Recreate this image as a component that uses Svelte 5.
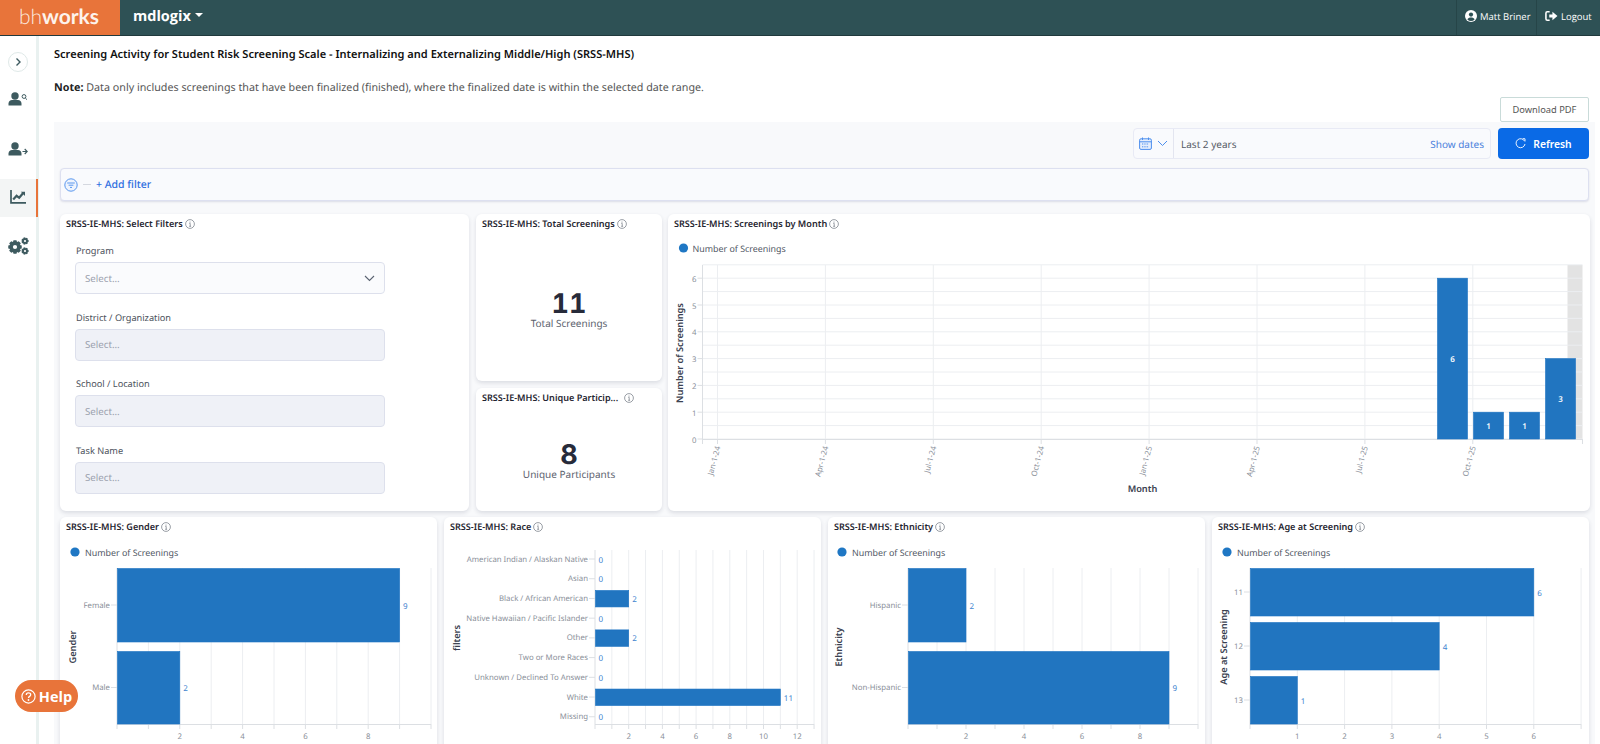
<script>
  const range = (a, b, s = 1) => { const r = []; for (let v = a; v <= b + 1e-9; v += s) r.push(v); return r; };

  const gear = (cx, cy, ro, ri, n) => {
    const pts = [];
    for (let i = 0; i < n; i++) {
      const a = (i / n) * Math.PI * 2;
      const w = Math.PI / n;
      [[ri, -w], [ro, -w * 0.55], [ro, w * 0.55], [ri, w]].forEach(([r, d]) => {
        pts.push(`${(cx + r * Math.cos(a + d)).toFixed(2)} ${(cy + r * Math.sin(a + d)).toFixed(2)}`);
      });
    }
    return 'M' + pts.join('L') + 'Z';
  };

  const gender = {
    name: 'SRSS-IE-MHS: Gender', x0: 60, left: 117, right: 431, unit: 31.4, max: 10, top: 568, step: 2, legend: 75, title: 'Gender', titleX: 72, titleY: 647,
    rows: [
      { label: 'Female', v: 9, y: 568, h: 74 },
      { label: 'Male', v: 2, y: 651, h: 73 }
    ]
  };
  const raceLabels = [
    ['American Indian / Alaskan Native', 0], ['Asian', 0], ['Black / African American', 2], ['Native Hawaiian / Pacific Islander', 0],
    ['Other', 2], ['Two or More Races', 0], ['Unknown / Declined To Answer', 0], ['White', 11], ['Missing', 0]
  ];
  const race = {
    name: 'SRSS-IE-MHS: Race', x0: 444, left: 595, right: 814, unit: 16.85, max: 13, top: 550, step: 2, title: 'filters', titleX: 456, titleY: 638,
    rows: raceLabels.map(([label, v], i) => ({ label, v, y: 550.5 + i * 19.72, h: 17 }))
  };
  const ethnicity = {
    name: 'SRSS-IE-MHS: Ethnicity', x0: 828, left: 908, right: 1198, unit: 29, max: 10, top: 568, step: 2, legend: 842, title: 'Ethnicity', titleX: 838, titleY: 647,
    rows: [
      { label: 'Hispanic', v: 2, y: 568, h: 74 },
      { label: 'Non-Hispanic', v: 9, y: 651, h: 73 }
    ]
  };
  const age = {
    name: 'SRSS-IE-MHS: Age at Screening', x0: 1212, left: 1250, right: 1581, unit: 47.3, max: 7, top: 568, step: 1, legend: 1227, title: 'Age at Screening', titleX: 1223, titleY: 647,
    rows: [
      { label: '11', v: 6, y: 568, h: 48 },
      { label: '12', v: 4, y: 622, h: 48 },
      { label: '13', v: 1, y: 676, h: 48 }
    ]
  };
  const hcharts = [gender, race, ethnicity, age];

  const quarters = ['Jan-1-24', 'Apr-1-24', 'Jul-1-24', 'Oct-1-24', 'Jan-1-25', 'Apr-1-25', 'Jul-1-25', 'Oct-1-25'];
  const monthBars = [
    { x: 1437, v: 6 }, { x: 1473, v: 1 }, { x: 1509, v: 1 }, { x: 1545, v: 3 }
  ];
  const my = (v) => 439 - v * 26.8;
  const fields = [
    { label: 'Program', open: true },
    { label: 'District / Organization' },
    { label: 'School / Location' },
    { label: 'Task Name' }
  ];
</script>

{#snippet info()}
  <svg class="info" viewBox="0 0 10 10" aria-hidden="true">
    <circle cx="5" cy="5" r="4.4" fill="none" stroke="#6f7680" stroke-width=".7" />
    <path d="M4.3 4.4H5.2V7.3M4.2 7.3H6.1" fill="none" stroke="#6f7680" stroke-width=".7" />
    <circle cx="5" cy="2.9" r=".5" fill="#6f7680" />
  </svg>
{/snippet}

{#snippet user()}
  <circle cx="7" cy="4" r="3.7" fill="#3d5a5f" />
  <path d="M0.5 13.5V11.5C0.5 9.3 2.2 8 4 8H10C11.8 8 13.5 9.3 13.5 11.5V13.5Z" fill="#3d5a5f" />
{/snippet}

{#snippet hchart(c)}
  <article class="card">
    <h3>{c.name} {@render info()}</h3>
    <svg class="plot" viewBox="{c.x0} 537 377 237">
      {#if c.legend}
        <circle cx={c.legend} cy="552" r="4.6" fill="#1f77c4" />
        <text class="legend" x={c.legend + 10} y="555.5">Number of Screenings</text>
      {/if}
      {#each range(1, c.max) as v}
        <line class="grid" x1={c.left + v * c.unit} x2={c.left + v * c.unit} y1={c.top} y2="724" />
      {/each}
      <line class="axis" x1={c.left} x2={c.right} y1="724.5" y2="724.5" />
      <line class="axis" x1={c.left} x2={c.left} y1={c.top} y2="724" />
      {#each range(0, c.max) as v}
        <line class="axis" x1={c.left + v * c.unit} x2={c.left + v * c.unit} y1="724" y2="729" />
      {/each}
      {#each range(c.step, c.max - 1, c.step) as v}
        <text class="tick" text-anchor="middle" x={c.left + v * c.unit} y="739">{v}</text>
      {/each}
      {#each c.rows as r}
        <line class="axis" x1={c.left - 6} x2={c.left} y1={r.y + r.h / 2} y2={r.y + r.h / 2} />
        <text class="tick" text-anchor="end" x={c.left - 7} y={r.y + r.h / 2 + 2.5}>{r.label}</text>
        {#if r.v > 0}
          <rect class="bar" x={c.left + 0.5} y={r.y + 0.5} width={r.v * c.unit - 0.5} height={r.h - 0.5} />
        {/if}
        <text class="val" x={c.left + r.v * c.unit + 3.5} y={r.y + r.h / 2 + 3.5}>{r.v}</text>
      {/each}
      <text class="atitle" text-anchor="middle" transform="translate({c.titleX + 3.5} {c.titleY}) rotate(-90)">{c.title}</text>
    </svg>
  </article>
{/snippet}

<div class="page">
  <header class="top">
    <div class="brand"><span class="bh">bh</span><b>works</b></div>
    <div class="org">mdlogix<i class="caret"></i></div>
    <div class="right">
      <div class="hitem matt">
        <svg viewBox="0 0 12 12" aria-hidden="true"><circle cx="6" cy="6" r="6" fill="#fff" /><circle cx="6" cy="4.6" r="2.1" fill="#2e5155" /><path d="M2.4 9.5C3 7.9 4.4 7.4 6 7.4S9 7.9 9.6 9.5A5 5 0 0 1 2.4 9.5Z" fill="#2e5155" /></svg>
        <span>Matt Briner</span>
      </div>
      <div class="hitem logout">
        <svg viewBox="0 0 14 12" aria-hidden="true"><path d="M5 1.5H2.5Q1 1.5 1 3V9Q1 10.5 2.5 10.5H5" fill="none" stroke="#fff" stroke-width="1.7" /><path d="M4.6 4.3H8V1.4L13.4 6L8 10.6V7.7H4.6Z" fill="#fff" /></svg>
        <span>Logout</span>
      </div>
    </div>
  </header>

  <div class="body">
    <nav class="side">
      <div class="toggle">
        <svg viewBox="0 0 10 10" aria-hidden="true"><path d="M3.5 1.5L7 5L3.5 8.5" fill="none" stroke="#3d5a5f" stroke-width="1.4" /></svg>
      </div>
      <div class="nav">
        <svg width="20" height="14" viewBox="0 0 20 14" aria-hidden="true">{@render user()}<circle cx="16" cy="4.5" r="1.9" fill="none" stroke="#3d5a5f" /><path d="M17.3 6L19 7.7" stroke="#3d5a5f" /></svg>
      </div>
      <div class="nav">
        <svg width="20" height="14" viewBox="0 0 20 14" aria-hidden="true">{@render user()}<path d="M14.5 9.5H19M16.7 7L19.2 9.5L16.7 12" fill="none" stroke="#3d5a5f" stroke-width="1.1" /></svg>
      </div>
      <div class="nav active">
        <svg class="chart" width="16" height="15" viewBox="0 0 16 15" aria-hidden="true"><path d="M1 1V13.8H16" fill="none" stroke="#3d5a5f" stroke-width="1.7" /><path d="M3.2 10.5L6.6 6.8L9.2 8.8L13 4.2" fill="none" stroke="#3d5a5f" stroke-width="2.2" /><path d="M10.8 2.8H15V7Z" fill="#3d5a5f" /></svg>
      </div>
      <div class="nav">
        <svg width="21" height="18" viewBox="0 0 21 18" aria-hidden="true">
          <path fill="#3d5a5f" fill-rule="evenodd" d="{gear(7, 10, 6.9, 5.3, 8)} M7 7.9A2.1 2.1 0 1 0 7 12.1A2.1 2.1 0 1 0 7 7.9Z" />
          <path fill="#3d5a5f" fill-rule="evenodd" d="{gear(17, 4, 3.7, 2.8, 7)} M17 2.9A1.1 1.1 0 1 0 17 5.1A1.1 1.1 0 1 0 17 2.9Z" />
          <path fill="#3d5a5f" fill-rule="evenodd" d="{gear(17, 14, 3.7, 2.8, 7)} M17 12.9A1.1 1.1 0 1 0 17 15.1A1.1 1.1 0 1 0 17 12.9Z" />
        </svg>
      </div>
    </nav>

    <main class="main">
      <h1>Screening Activity for Student Risk Screening Scale - Internalizing and Externalizing Middle/High (SRSS-MHS)</h1>
      <p class="note"><b>Note:</b> Data only includes screenings that have been finalized (finished), where the finalized date is within the selected date range.</p>
      <div class="dl"><button class="pdf">Download PDF</button></div>

      <section class="dash">
        <div class="tools">
          <div class="dates">
            <div class="cal">
              <svg width="13" height="13" viewBox="0 0 13 13" aria-hidden="true"><rect x=".6" y="1.8" width="11.8" height="10.6" rx="1.4" fill="#e5eefc" stroke="#4d8fee" /><path d="M.6 4.8H12.4M3.5 .5V3M9.5 .5V3" stroke="#4d8fee" /><path d="M3 7H10M3 9.8H10" stroke="#4d8fee" stroke-dasharray="1.3 1" /></svg>
              <svg width="11" height="7" viewBox="0 0 11 7" aria-hidden="true"><path d="M1 1L5.5 5.5L10 1" fill="none" stroke="#4d8fee" /></svg>
            </div>
            <span class="range">Last 2 years</span>
            <span class="show">Show dates</span>
          </div>
          <button class="refresh">
            <svg width="11" height="11" viewBox="0 0 11 11" aria-hidden="true"><path d="M9.6 3.2A4.5 4.5 0 1 0 10 6" fill="none" stroke="#fff" stroke-width=".9" /><path d="M7.8 .6L10 .8V3.4" fill="none" stroke="#fff" stroke-width=".9" /></svg>
            Refresh
          </button>
        </div>

        <div class="filterbar">
          <svg width="14" height="14" viewBox="0 0 14 14" aria-hidden="true"><circle cx="7" cy="7" r="6.2" fill="#eef4fe" stroke="#5a97ee" /><path d="M3.2 5H10.8M4.6 7.2H9.4M6 9.4H8" stroke="#5a97ee" stroke-width="1" /></svg>
          <span class="dash-mark"></span>
          <span class="add">+ Add filter</span>
        </div>

        <div class="row1">
          <article class="card filters">
            <h3>SRSS-IE-MHS: Select Filters {@render info()}</h3>
            {#each fields as f}
              <div class="field">
                <label>{f.label}</label>
                <div class="select" class:open={f.open}>
                  <span>Select...</span>
                  {#if f.open}
                    <svg width="11" height="7" viewBox="0 0 11 7" aria-hidden="true"><path d="M1 1L5.5 5.5L10 1" fill="none" stroke="#5b6472" stroke-width="1.1" /></svg>
                  {/if}
                </div>
              </div>
            {/each}
          </article>

          <div class="stack">
            <article class="card stat s1">
              <h3>SRSS-IE-MHS: Total Screenings {@render info()}</h3>
              <div class="num"><strong>11</strong><span>Total Screenings</span></div>
            </article>
            <article class="card stat s2">
              <h3 class="spread"><span>SRSS-IE-MHS: Unique Particip...</span> {@render info()}</h3>
              <div class="num"><strong>8</strong><span>Unique Participants</span></div>
            </article>
          </div>

          <article class="card">
            <h3>SRSS-IE-MHS: Screenings by Month {@render info()}</h3>
            <svg class="plot month" viewBox="668 234 921 277">
              <circle cx="683" cy="248" r="4.6" fill="#1f77c4" />
              <text class="legend" x="692" y="251.5">Number of Screenings</text>
              <rect x="1567" y="265" width="15" height="174" fill="#e3e3e3" />
              {#each range(0, 6.5, 0.5) as v}
                <line class="grid" x1="702" x2="1582" y1={my(v)} y2={my(v)} />
              {/each}
              {#each quarters as q, i}
                {@const x = 717 + i * 107.9}
                <line class="grid" x1={x} x2={x} y1="265" y2="439" />
                <line class="axis" x1={x} x2={x} y1="439" y2="444" />
                <text class="tick" text-anchor="end" transform="translate({x + 3} 447) rotate(-75)">{q}</text>
              {/each}
              <line class="axis" x1="702" x2="1582" y1="439.5" y2="439.5" />
              <line class="axis" x1="702" x2="702" y1="265" y2="444" />
              <line class="axis" x1="1582" x2="1582" y1="439" y2="444" />
              {#each range(0, 6) as v}
                <line class="axis" x1="697" x2="702" y1={my(v)} y2={my(v)} />
                <text class="tick" text-anchor="end" x="696" y={my(v) + 3.5}>{v}</text>
              {/each}
              {#each monthBars as b}
                <rect class="bar" x={b.x} y={my(b.v)} width="30" height={b.v * 26.8} />
                <text class="inbar" text-anchor="middle" x={b.x + 15} y={my(b.v / 2) + 3.5}>{b.v}</text>
              {/each}
              <text class="atitle" text-anchor="middle" transform="translate(682.5 353) rotate(-90)">Number of Screenings</text>
              <text class="atitle" text-anchor="middle" x="1142" y="492">Month</text>
            </svg>
          </article>
        </div>

        <div class="row2">
          {#each hcharts as c}
            {@render hchart(c)}
          {/each}
        </div>
      </section>
    </main>
  </div>

  <button class="help">
    <svg width="15" height="15" viewBox="0 0 15 15" aria-hidden="true"><circle cx="7.5" cy="7.5" r="6.6" fill="none" stroke="#fff" stroke-width="1.2" /><path d="M5.3 5.9C5.3 3.2 9.7 3.2 9.7 5.8C9.7 7.4 7.5 7.3 7.5 9" fill="none" stroke="#fff" stroke-width="1.3" /><circle cx="7.5" cy="11" r=".9" fill="#fff" /></svg>
    Help
  </button>
</div>

<style>
  :global(body) { margin: 0; background: #fff; }
  .page { height: 744px; overflow: hidden; display: flex; flex-direction: column; font-family: "Noto Sans", "Liberation Sans", sans-serif; color: #333; text-rendering: geometricPrecision; }

  .top { height: 35px; flex: none; display: flex; align-items: stretch; background: #2e5155; border-bottom: 1px solid #20393c; color: #fff; font-family: "Open Sans", sans-serif; }
  .brand { width: 120px; background: #e8743a; display: flex; align-items: center; justify-content: center; font-family: "Lato", sans-serif; font-size: 21px; color: #fbe9df; padding: 0 2px 2px 0; box-sizing: border-box; }
  .brand .bh { font-weight: 300; }
  .brand b { font-weight: 700; color: #fdf3ec; }
  .org { margin-left: 13px; display: flex; align-items: center; font-size: 14.5px; font-weight: 700; padding-bottom: 3px; }
  .caret { margin-left: 4px; margin-top: -3px; border: 4px solid transparent; border-top-color: #fff; border-bottom: 0; }
  .right { margin-left: auto; display: flex; }
  .hitem { display: flex; align-items: center; gap: 3px; font-size: 9.5px; font-weight: 500; padding-bottom: 3px; border-left: 1px solid #264548; white-space: nowrap; box-sizing: border-box; }
  .matt { width: 80px; padding-left: 8px; }
  .matt svg { width: 12px; height: 12px; flex: none; }
  .logout { width: 64px; padding-left: 8px; }
  .logout svg { width: 13px; height: 12px; flex: none; }

  .body { flex: 1; min-height: 0; display: flex; }
  .side { width: 36px; flex: none; border-right: 3px solid #e9f1f0; display: flex; flex-direction: column; }
  .toggle { width: 18px; height: 18px; margin: 16px 0 0 7.5px; border: 1px solid #dfe9e8; border-radius: 50%; display: flex; align-items: center; justify-content: center; }
  .toggle svg { width: 10px; height: 10px; }
  .nav { height: 38px; display: flex; align-items: center; justify-content: center; box-sizing: border-box; }
  .toggle + .nav { margin-top: 8px; }
  .nav + .nav { margin-top: 12px; }
  .nav.active { background: #f3f5f5; margin-top: 11px; border-right: 2px solid #e8743a; margin-right: -2px; }
  .chart { margin-bottom: 4px; }
  .nav.active + .nav { margin-top: 10px; }

  .main { flex: 1; min-width: 0; padding: 0 5px 0 15px; overflow: hidden; }
  h1 { margin: 12px 0 0; height: 14px; line-height: 14px; font-size: 11.06px; font-weight: 600; color: #111; white-space: nowrap; }
  .note { margin: 19px 0 0; height: 14px; line-height: 14px; font-size: 10.73px; color: #555; white-space: nowrap; }
  .note b { color: #222; font-weight: 700; }
  .dl { display: flex; justify-content: flex-end; padding-right: 6px; margin-top: 2px; }
  .pdf { width: 89px; height: 25px; padding: 0; box-sizing: border-box; background: #fff; border: 1px solid #c9dbd9; border-radius: 2px; font-family: "Noto Sans", sans-serif; font-size: 9.3px; color: #555; }

  .dash { background: #f8f9fb; padding: 6px 6px 0; }
  .tools { display: flex; justify-content: flex-end; gap: 7px; height: 31px; }
  .dates { width: 358px; box-sizing: border-box; display: flex; align-items: center; border: 1px solid #e8eaf5; border-radius: 4px; background: #f9fafd; font-size: 10px; }
  .cal { width: 40px; height: 100%; box-sizing: border-box; border-right: 1px solid #e3e5f0; display: flex; align-items: center; justify-content: center; gap: 5px; }
  .range { margin-left: 7px; color: #555b66; }
  .show { margin-left: auto; margin-right: 6px; color: #4a7fdc; }
  .refresh { width: 91px; display: flex; align-items: center; justify-content: center; gap: 7px; padding: 0; border: 0; border-radius: 4px; background: #0a6ae6; color: #fff; font-family: "Noto Sans", sans-serif; font-size: 10.3px; font-weight: 600; }

  .filterbar { height: 33px; margin-top: 9px; box-sizing: border-box; padding-left: 3px; display: flex; align-items: center; border: 1px solid #dde0f0; border-radius: 4px; background: #f9fafd; box-shadow: 0 1px 2px rgba(60, 70, 120, .15); }
  .dash-mark { width: 8px; height: 1px; margin: 0 5px 0 5px; background: #d5d8e0; }
  .add { font-size: 10.5px; line-height: 14px; padding-top: 1px; color: #2f6fe0; font-weight: 500; }

  .row1 { display: grid; grid-template-columns: 409px 186px 921px; gap: 7px; margin-top: 13px; height: 297px; }
  .row1 > :last-child { margin-left: -1px; }
  .row2 { display: grid; grid-template-columns: repeat(4, 1fr); gap: 7px; margin-top: 6px; height: 257px; }
  .card { position: relative; background: #fff; border-radius: 6px; box-shadow: 0 2px 4px rgba(40, 50, 80, .14); display: flex; flex-direction: column; min-height: 0; overflow: hidden; }
  h3 { margin: 0; height: 20px; padding: 0 6px; flex: none; box-sizing: border-box; display: flex; align-items: center; gap: 2px; font-size: 9.1px; line-height: 12px; font-weight: 600; color: #1f2530; white-space: nowrap; }
  .info { width: 10px; height: 10px; flex: none; }
  .spread { gap: 6px; }
  .plot { display: block; width: 100%; flex: none; }
  .row2 .plot { height: 237px; }
  .month { height: 277px; }
  .grid { stroke: #eceef1; stroke-width: 1; }
  .axis { stroke: #dcdfe3; stroke-width: 1; }
  .bar { fill: #2175c0; stroke: #1b72c2; stroke-width: .6; }
  text { font-family: "Noto Sans", sans-serif; }
  .legend { font-size: 8.9px; fill: #515865; }
  .tick { font-size: 7.8px; fill: #8a8f99; }
  .val { font-size: 8px; fill: #3f84cf; }
  .inbar { font-size: 8px; fill: #fff; font-weight: 600; }
  .atitle { font-size: 9.2px; font-weight: 600; fill: #3a4150; }

  .field { flex: none; margin: 0 0 0 15px; width: 310px; height: 66.6px; }
  .filters h3 + .field { margin-top: 10px; }
  label { display: block; font-size: 9.2px; line-height: 14px; color: #4c525c; height: 18px; padding-left: 1px; }
  .select { height: 32px; box-sizing: border-box; display: flex; align-items: center; justify-content: space-between; padding: 0 9px; background: #eff1f7; border: 1px solid #dde0ec; border-radius: 4px; font-size: 9.7px; color: #9aa0ad; }
  .select.open { background: #fafbfd; }

  .stack { display: flex; flex-direction: column; gap: 7px; }
  .s1 { height: 167px; flex: none; }
  .s2 { flex: 1; }
  .num { flex: 1; display: flex; flex-direction: column; align-items: center; justify-content: center; }
  .s1 .num { padding-top: 5px; }
  .s2 .num { padding-top: 3px; }
  .num strong { font-family: "Inter", sans-serif; font-variant-numeric: tabular-nums; font-size: 27px; line-height: 25px; font-weight: 700; color: #272b3a; }
  .num span { font-size: 10px; line-height: 14px; color: #5c626e; }

  .help { position: fixed; left: 15px; top: 680px; width: 63px; height: 32px; padding: 0; display: flex; align-items: center; justify-content: center; gap: 3px; border: 0; border-radius: 16px; background: #e8743a; color: #fff; font-family: "Open Sans", sans-serif; font-size: 14.5px; font-weight: 700; }
</style>
